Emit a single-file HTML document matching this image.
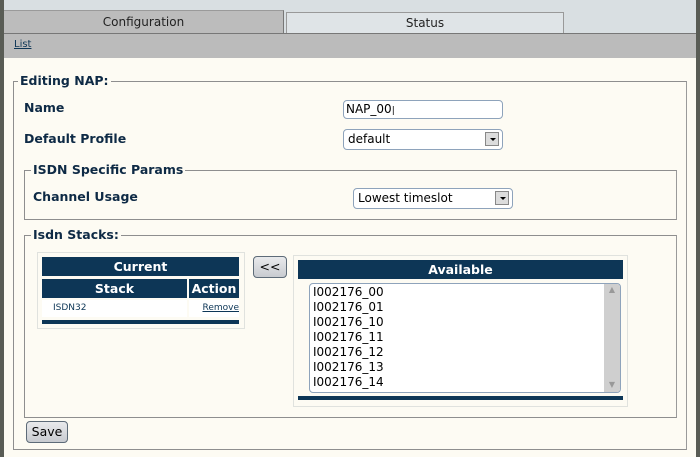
<!DOCTYPE html>
<html><head><style>
*{margin:0;padding:0;box-sizing:border-box}
body{width:700px;height:457px;position:relative;overflow:hidden;background:#fdfbf3;font-family:"DejaVu Sans","Liberation Sans",sans-serif;color:#0e2a45}
.a{position:absolute}
.lbl{font-weight:bold;font-size:12.5px;color:#0e2a45}
.fs{position:absolute;border:1px solid #8e8e8e;border-right-color:#9a9a9a}
.lg{position:absolute;background:#fdfbf3;font-weight:bold;font-size:12.5px;padding:0 2px;color:#0e2a45}
.inp{position:absolute;background:#fff;border:1px solid #8ea3bb;border-radius:4px;font-size:12px;color:#000}
.btn{position:absolute;background:linear-gradient(#e9eaec,#c8cbd0);border:1px solid #5d6b78;border-radius:4px;font-size:12.5px;color:#000;text-align:center}
.hd{position:absolute;background:#0d3656;color:#fff;font-weight:bold;font-size:12.5px;text-align:center}
.arr{position:absolute;width:14px;height:14px;background:#dcdcdc;border:1px solid #888;top:2px;right:3px}
.arr:after{content:"";position:absolute;left:4px;top:5px;border-left:3px solid transparent;border-right:3px solid transparent;border-top:3px solid #000}
</style></head><body>
<div class="a" style="left:0;top:0;width:4px;height:457px;background:#595c55"></div>
<div class="a" style="left:696px;top:0;width:4px;height:457px;background:#595c55"></div>
<div class="a" style="left:4px;top:0;width:692px;height:33px;background:#d9dfe2"></div>
<div class="a" style="left:4px;top:10px;width:280px;height:24px;background:#bcbcbc;border-top:1px solid #9a9a9a;border-right:1px solid #777;font-size:12px;color:#222;text-align:center;line-height:22px">Configuration</div>
<div class="a" style="left:286px;top:12px;width:278px;height:21px;background:#dfe4e7;border:1px solid #999;border-bottom:none;font-size:12px;color:#222;text-align:center;line-height:20px">Status</div>
<div class="a" style="left:4px;top:33px;width:692px;height:25px;background:#bbbbbb;border-top:1px solid #777"></div>
<div class="a" style="left:14px;top:39px;font-size:10px;color:#0d3656;text-decoration:underline">List</div>

<div class="fs" style="left:13px;top:81px;width:674px;height:369px"></div>
<div class="lg" style="left:18px;top:73px">Editing NAP:</div>
<div class="a lbl" style="left:24px;top:100px">Name</div>
<div class="inp" style="left:343px;top:100px;width:160px;height:19px;padding:1px 2px;line-height:15px">NAP_00<span style="font-size:9px">|</span></div>
<div class="a lbl" style="left:24px;top:131px">Default Profile</div>
<div class="inp" style="left:343px;top:129px;width:160px;height:21px;padding:2px 4px;line-height:15px">default<div class="arr"></div></div>

<div class="fs" style="left:24px;top:170px;width:653px;height:50px"></div>
<div class="lg" style="left:31px;top:162px">ISDN Specific Params</div>
<div class="a lbl" style="left:33px;top:189px">Channel Usage</div>
<div class="inp" style="left:353px;top:188px;width:160px;height:21px;padding:2px 4px;line-height:15px">Lowest timeslot<div class="arr"></div></div>

<div class="fs" style="left:24px;top:235px;width:653px;height:183px"></div>
<div class="lg" style="left:31px;top:227px">Isdn Stacks:</div>

<div class="a" style="left:37px;top:252px;width:208px;height:77px;border:1px solid #e0e2de;background:#fdfbf3"></div>
<div class="hd" style="left:42px;top:257px;width:197px;height:19px;line-height:19px">Current</div>
<div class="hd" style="left:42px;top:279px;width:145px;height:19px;line-height:19px">Stack</div>
<div class="hd" style="left:189px;top:279px;width:50px;height:19px;line-height:19px">Action</div>
<div class="a" style="left:42px;top:300px;width:145px;height:17px;background:#fff;font-size:9px;padding-left:11px;line-height:17px;color:#0d3656">ISDN32</div>
<div class="a" style="left:189px;top:300px;width:50px;height:17px;background:#fff;font-size:9px;text-align:right;line-height:17px;color:#0d3656;text-decoration:underline">Remove</div>
<div class="a" style="left:42px;top:320px;width:197px;height:4px;background:#0d3656"></div>

<div class="btn" style="left:253px;top:256px;width:34px;height:22px;line-height:19px">&lt;&lt;</div>

<div class="a" style="left:293px;top:255px;width:335px;height:152px;border:1px solid #e0e2de;background:#fdfbf3"></div>
<div class="hd" style="left:298px;top:260px;width:325px;height:19px;line-height:19px">Available</div>
<div class="a" style="left:309px;top:283px;width:312px;height:110px;background:#fff;border:1px solid #8ea3bb;border-radius:4px;font-size:12px;color:#000;line-height:15px;padding:1px 3px;overflow:hidden">
I002176_00<br>I002176_01<br>I002176_10<br>I002176_11<br>I002176_12<br>I002176_13<br>I002176_14
<div class="a" style="right:0;top:0;width:16px;height:108px;background:#cfcfcf;color:#999;font-size:8px;text-align:center;line-height:12px">▲<div style="position:absolute;bottom:1px;width:16px">▼</div></div>
</div>
<div class="a" style="left:298px;top:396px;width:325px;height:4px;background:#0d3656"></div>

<div class="btn" style="left:26px;top:421px;width:42px;height:22px;line-height:19px">Save</div>
</body></html>
